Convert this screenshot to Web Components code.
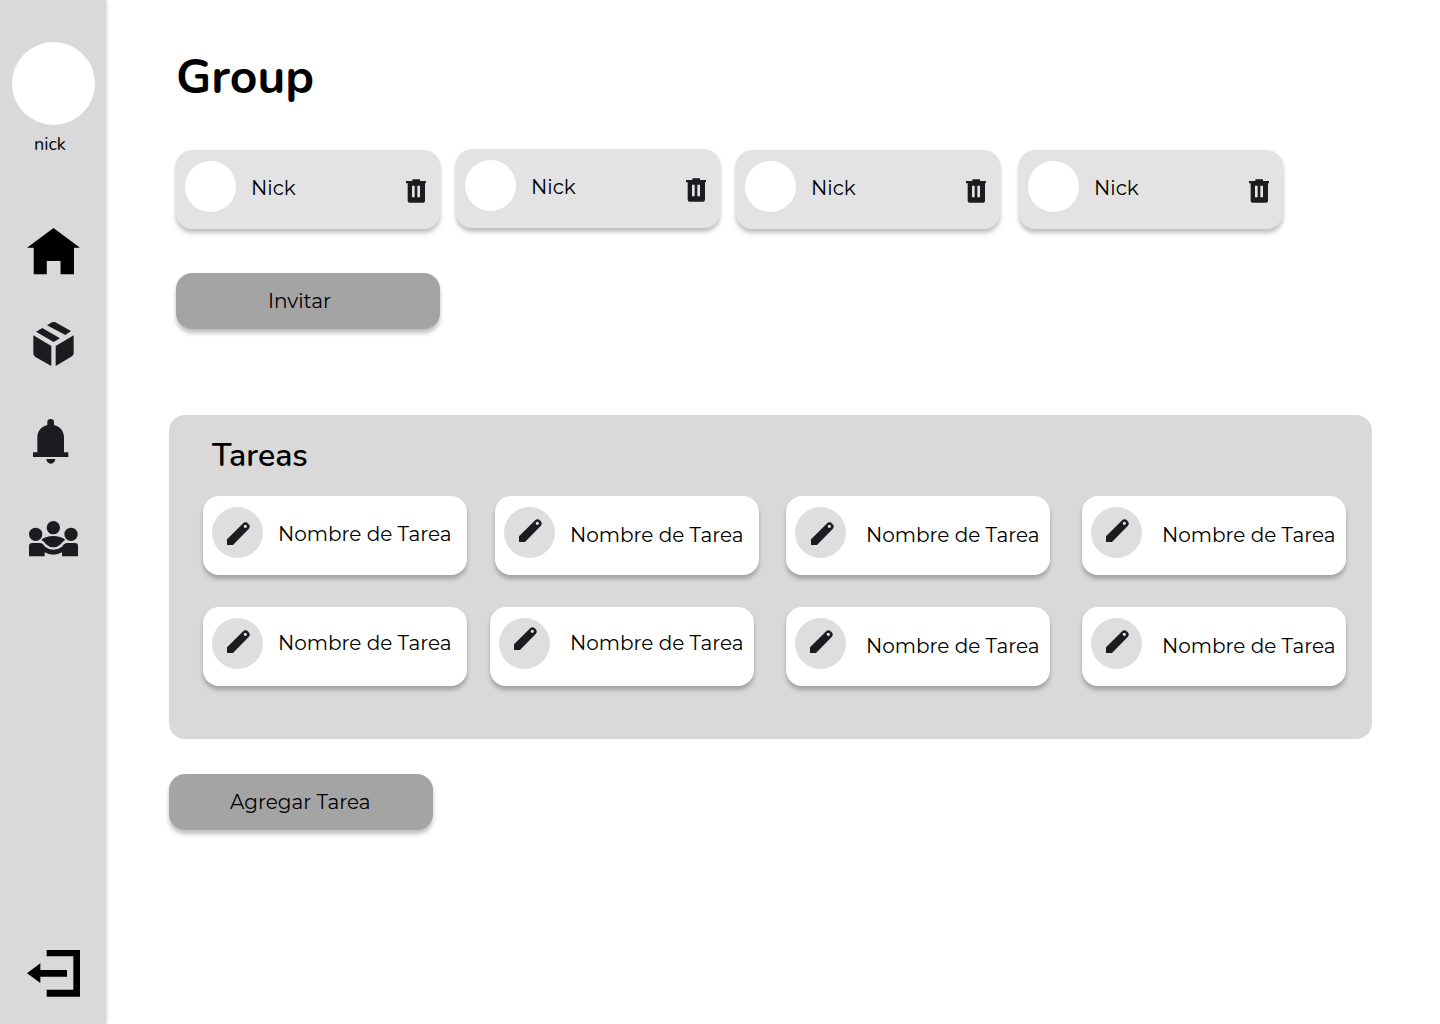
<!DOCTYPE html>
<html lang="es">
<head>
<meta charset="utf-8">
<title>Group</title>
<style>
html,body{margin:0;height:100%;background:#fff;overflow:hidden}
</style>
</head>
<body>
<group-page></group-page>
<script>
const define = (name, render) => customElements.define(name, class extends HTMLElement {
  connectedCallback() {
    if (this.shadowRoot) return;
    this.attachShadow({ mode: 'open' }).innerHTML = render(this);
  }
});

// One line of text; "kind" picks the type style.
const kinds = {
  body:  'font:400 20px/24px Montserrat,Inter,sans-serif',
  nick:  'font:400 18px/25px Nunito,Lato,sans-serif',
  head:  'font:600 32px/44px Nunito,Lato,sans-serif',
  title: 'font:700 48px/65px Nunito,Lato,sans-serif'
};
define('text-line', el =>
  `<style>:host{display:block;flex:none;white-space:nowrap;color:#000;${kinds[el.getAttribute('kind') || 'body']}}</style><slot></slot>`);

const icons = {
  home: [53, 47, '51 39 158 141', '#000', 'M130 39L209 98H191V178H151V138H110V178H71V98H51Z'],
  box: [41, 44, '69 36 123 132', '#1d1b20', 'M111 46L126 37Q131 35 136 37L183 63L166 75ZM78 65L97 54L150 85L131 96ZM70 76L124 108V168L75 140Q70 136 70 130ZM137 108L191 76V130Q191 136 186 139L137 168Z'],
  bell: [36, 45, '68 27 108 135', '#1d1b20', 'M111 45V37a10 10 0 0 1 20 0V45C150 49 161 64 161 83V127H174V141H68V127H81V83C81 64 92 49 111 45ZM108 147H135A13.5 14 0 0 1 108 147Z'],
  people: [49, 36, '57 47 147 108', '#1d1b20', 'M57 87a20 20 0 1 0 40 0a20 20 0 1 0-40 0ZM110 67a20 20 0 1 0 40 0a20 20 0 1 0-40 0ZM163 87a20 20 0 1 0 40 0a20 20 0 1 0-40 0ZM57 153V122Q57 113 66 113H90Q98 113 105 124Q116 133 130 133Q144 133 156 124Q163 113 171 113H195Q204 113 204 122V153H156V141Q144 148 130 148Q116 148 104 141V153ZM94 103Q108 92 130 92Q152 92 166 103Q158 108 152 117Q143 126 130 126Q117 126 108 117Q102 108 94 103Z'],
  exit: [53, 47, '51 30 159 141', '#000', 'M110 30H210V170H110V149H190V49H110ZM51 100L91 70V90H171V110H91V129Z'],
  trash: [20, 24, '33 27 60 72', '#1d1b20', 'M33 33H52V28H75V33H93V40H90V92Q90 98 84 98H44Q38 98 38 92V40H33ZM51 47V82H59V47ZM67 47V82H75V47Z'],
  pencil: [23, 23, '185 350 69 69', '#1d1b20', 'M185 419V402L232 355Q240 347 249 355Q257 363 250 371L203 419ZM235 363a5 5 0 1 0 10 0a5 5 0 1 0-10 0Z']
};
define('ui-icon', el => {
  const [w, h, vb, fill, d] = icons[el.getAttribute('name')];
  return `<style>:host{display:block;flex:none;width:${w}px;height:${h}px}svg{display:block}</style>
    <svg width="${w}" height="${h}" viewBox="${vb}" preserveAspectRatio="none" fill="${fill}" fill-rule="evenodd"><path d="${d}"/></svg>`;
});

define('side-bar', () => `<style>
  :host{display:flex;flex-direction:column;flex:none;box-sizing:border-box;width:106px;height:1024px;padding-top:42px;background:#d9d9d9;box-shadow:0 0 4px rgba(0,0,0,.25)}
  .avatar{width:83px;height:83px;margin-left:12px;border-radius:50%;background:#fff}
  text-line{margin:7px 0 0 34px}
  nav{display:flex;flex-direction:column;margin-top:71px}
  </style>
  <div class="avatar"></div>
  <text-line kind="nick">nick</text-line>
  <nav>
    <ui-icon name="home" style="margin-left:27px"></ui-icon>
    <ui-icon name="box" style="margin:47px 0 0 33px"></ui-icon>
    <ui-icon name="bell" style="margin:53px 0 0 32.7px"></ui-icon>
    <ui-icon name="people" style="margin:56.7px 0 0 29px"></ui-icon>
    <ui-icon name="exit" style="margin:393.3px 0 0 27px"></ui-icon>
  </nav>`);

define('member-card', () => `<style>
  :host{display:flex;flex:none;align-items:flex-start;box-sizing:border-box;width:264px;height:79px;padding:11px 14px 0 9px;border-radius:16px;background:#e3e3e3;box-shadow:0 4px 4px rgba(0,0,0,.25)}
  .avatar{flex:none;width:51px;height:51px;border-radius:50%;background:#fff}
  text-line{margin:15px 0 0 15px}
  ui-icon{margin:18px 0 0 auto}
  </style>
  <div class="avatar"></div><text-line>Nick</text-line><ui-icon name="trash"></ui-icon>`);

// px/py: pencil offset inside its disc; tx/ty: label offset inside the card.
define('task-card', el => {
  const [px, py, tx, ty] = el.getAttribute('offsets').split(' ').map(Number);
  return `<style>
  :host{display:flex;flex:none;align-items:flex-start;box-sizing:border-box;width:264px;height:79px;padding:11px 0 0 9px;border-radius:16px;background:#fff;box-shadow:0 4px 4px rgba(0,0,0,.25)}
  .disc{flex:none;box-sizing:border-box;width:51px;height:51px;padding:${py}px 0 0 ${px}px;border-radius:50%;background:#dedede}
  text-line{margin:${ty - 30}px 0 0 ${tx - 61}px}
  </style>
  <div class="disc"><ui-icon name="pencil"></ui-icon></div><text-line>Nombre de Tarea</text-line>`;
});

define('action-button', el => `<style>
  :host{display:block;width:264px}
  button{display:flex;align-items:flex-start;box-sizing:border-box;width:264px;height:56px;margin:0;border:0;border-radius:16px;padding:16px 0 0 ${el.getAttribute('inset')}px;background:#a4a4a4;box-shadow:0 4px 4px rgba(0,0,0,.25)}
  </style><button><text-line>${el.textContent}</text-line></button>`);

define('task-panel', () => `<style>
  :host{display:block;box-sizing:border-box;width:1203px;height:324px;padding:19px 0 0 34px;border-radius:16px;background:#d9d9d9}
  .row{display:flex}
  .head{margin-left:9px}
  .first{margin-top:18px}
  .second{margin-top:32px}
  </style>
  <text-line class="head" kind="head">Tareas</text-line>
  <div class="row first">
    <task-card offsets="14.7 14.7 76 45"></task-card>
    <task-card offsets="15 11.7 76 46" style="margin-left:28px"></task-card>
    <task-card offsets="16 15 81 46" style="margin-left:27px"></task-card>
    <task-card offsets="14.7 12 81 46" style="margin-left:32px"></task-card>
  </div>
  <div class="row second">
    <task-card offsets="14.7 12 76 43"></task-card>
    <task-card offsets="15 9 81 43" style="margin-left:23px"></task-card>
    <task-card offsets="15 12 81 46" style="margin-left:32px"></task-card>
    <task-card offsets="14.7 12 81 46" style="margin-left:32px"></task-card>
  </div>`);

define('group-page', () => `<style>
  :host{display:flex;height:1024px;background:#fff;color:#000}
  main{display:flex;flex-direction:column;padding:45px 0 0 63px}
  .title{margin-left:7px}
  .members{display:flex;margin:40px 0 0 7px}
  .members :nth-child(2){margin:-1px 0 0 16px}
  .members :nth-child(3){margin-left:16px}
  .members :nth-child(4){margin-left:19px}
  .invite{margin:44px 0 0 7px}
  task-panel{margin-top:86px}
  .add{margin-top:35px}
  </style>
  <side-bar></side-bar>
  <main>
    <text-line class="title" kind="title">Group</text-line>
    <div class="members"><member-card></member-card><member-card></member-card><member-card></member-card><member-card></member-card></div>
    <action-button class="invite" inset="92">Invitar</action-button>
    <task-panel></task-panel>
    <action-button class="add" inset="61">Agregar Tarea</action-button>
  </main>`);
</script>
</body>
</html>
